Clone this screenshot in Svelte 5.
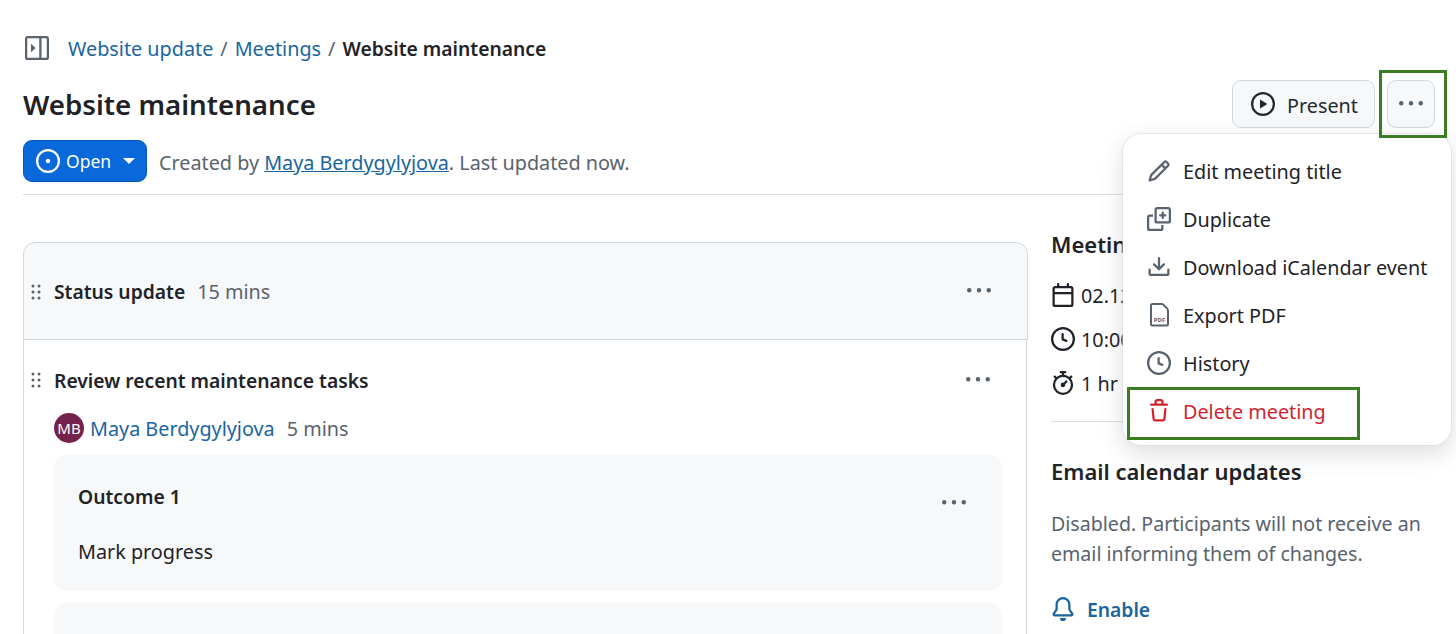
<script lang="ts">
  const icons: Record<string, string> = {
    sidebar: 'M6.823 7.823a.25.25 0 0 1 0 .354l-2.396 2.396A.25.25 0 0 1 4 10.396V5.604a.25.25 0 0 1 .427-.177Z M1.75 0h12.5C15.216 0 16 .784 16 1.75v12.5A1.75 1.75 0 0 1 14.25 16H1.75A1.75 1.75 0 0 1 0 14.25V1.75C0 .784.784 0 1.75 0ZM1.5 1.75v12.5c0 .138.112.25.25.25H9.5v-13H1.75a.25.25 0 0 0-.25.25ZM11 14.5h3.25a.25.25 0 0 0 .25-.25V1.75a.25.25 0 0 0-.25-.25H11Z',
    kebab: 'M8 9a1.5 1.5 0 1 0 0-3 1.5 1.5 0 0 0 0 3ZM1.5 9a1.5 1.5 0 1 0 0-3 1.5 1.5 0 0 0 0 3Zm13 0a1.5 1.5 0 1 0 0-3 1.5 1.5 0 0 0 0 3Z',
    play: 'M8 0a8 8 0 1 1 0 16A8 8 0 0 1 8 0ZM1.5 8a6.5 6.5 0 1 0 13 0 6.5 6.5 0 0 0-13 0Zm4.879-2.773 4.264 2.559a.25.25 0 0 1 0 .428l-4.264 2.559A.25.25 0 0 1 6 10.559V5.442a.25.25 0 0 1 .379-.215Z',
    open: 'M8 9.5a1.5 1.5 0 1 0 0-3 1.5 1.5 0 0 0 0 3Z M8 0a8 8 0 1 1 0 16A8 8 0 0 1 8 0ZM1.5 8a6.5 6.5 0 1 0 13 0 6.5 6.5 0 0 0-13 0Z',
    grabber: 'M10 13a1 1 0 1 1 0-2 1 1 0 0 1 0 2Zm0-4a1 1 0 1 1 0-2 1 1 0 0 1 0 2Zm-4 4a1 1 0 1 1 0-2 1 1 0 0 1 0 2Zm5-9a1 1 0 1 1-2 0 1 1 0 0 1 2 0ZM7 8a1 1 0 1 1-2 0 1 1 0 0 1 2 0ZM6 5a1 1 0 1 1 0-2 1 1 0 0 1 0 2Z',
    pencil: 'M11.013 1.427a1.75 1.75 0 0 1 2.474 0l1.086 1.086a1.75 1.75 0 0 1 0 2.474l-8.61 8.61c-.21.21-.47.364-.756.445l-3.251.93a.75.75 0 0 1-.927-.928l.929-3.25c.081-.286.235-.547.445-.758l8.61-8.61Zm.176 4.823L9.75 4.81l-6.286 6.287a.253.253 0 0 0-.064.108l-.558 1.953 1.953-.558a.253.253 0 0 0 .108-.064Zm1.238-3.763a.25.25 0 0 0-.354 0L10.811 3.75l1.439 1.44 1.263-1.263a.25.25 0 0 0 0-.354Z',
    duplicate: 'M10.5 3a.75.75 0 0 1 .75.75v1h1a.75.75 0 0 1 0 1.5h-1v1a.75.75 0 0 1-1.5 0v-1h-1a.75.75 0 0 1 0-1.5h1v-1A.75.75 0 0 1 10.5 3Z M6.75 0h7.5C15.216 0 16 .784 16 1.75v7.5A1.75 1.75 0 0 1 14.25 11h-7.5A1.75 1.75 0 0 1 5 9.25v-7.5C5 .784 5.784 0 6.75 0Zm0 1.5a.25.25 0 0 0-.25.25v7.5c0 .138.112.25.25.25h7.5a.25.25 0 0 0 .25-.25v-7.5a.25.25 0 0 0-.25-.25Z M1.75 5H4v1.5H1.75a.25.25 0 0 0-.25.25v7.5c0 .138.112.25.25.25h7.5a.25.25 0 0 0 .25-.25V12H11v2.25A1.75 1.75 0 0 1 9.25 16h-7.5A1.75 1.75 0 0 1 0 14.25v-7.5C0 5.784.784 5 1.75 5Z',
    download: 'M2.75 14A1.75 1.75 0 0 1 1 12.25v-2.5a.75.75 0 0 1 1.5 0v2.5c0 .138.112.25.25.25h10.5a.25.25 0 0 0 .25-.25v-2.5a.75.75 0 0 1 1.5 0v2.5A1.75 1.75 0 0 1 13.25 14Z M7.25 7.689V2a.75.75 0 0 1 1.5 0v5.689l1.97-1.969a.749.749 0 1 1 1.06 1.06l-3.25 3.25a.749.749 0 0 1-1.06 0L4.22 6.78a.749.749 0 1 1 1.06-1.06l1.97 1.969Z',
    clock: 'M8 0a8 8 0 1 1 0 16A8 8 0 0 1 8 0ZM1.5 8a6.5 6.5 0 1 0 13 0 6.5 6.5 0 0 0-13 0Zm7-3.25v2.992l2.028.812a.75.75 0 0 1-.557 1.392l-2.5-1A.751.751 0 0 1 7 8.25v-3.5a.75.75 0 0 1 1.5 0Z',
    trash: 'M11 1.75V3h2.25a.75.75 0 0 1 0 1.5H2.75a.75.75 0 0 1 0-1.5H5V1.75C5 .784 5.784 0 6.75 0h2.5C10.216 0 11 .784 11 1.75ZM4.496 6.675l.66 6.6a.25.25 0 0 0 .249.225h5.19a.25.25 0 0 0 .249-.225l.66-6.6a.75.75 0 0 1 1.492.149l-.66 6.6A1.748 1.748 0 0 1 10.595 15h-5.19a1.75 1.75 0 0 1-1.741-1.575l-.66-6.6a.75.75 0 1 1 1.492-.15ZM6.5 1.75V3h3V1.75a.25.25 0 0 0-.25-.25h-2.5a.25.25 0 0 0-.25.25Z',
    calendar: 'M4.75 0a.75.75 0 0 1 .75.75V2h5V.75a.75.75 0 0 1 1.5 0V2h1.25c.966 0 1.75.784 1.75 1.75v10.5A1.75 1.75 0 0 1 13.25 16H2.75A1.75 1.75 0 0 1 1 14.25V3.75C1 2.784 1.784 2 2.75 2H4V.75A.75.75 0 0 1 4.75 0ZM2.5 7.5v6.75c0 .138.112.25.25.25h10.5a.25.25 0 0 0 .25-.25V7.5Zm10.75-4H2.75a.25.25 0 0 0-.25.25V6h11V3.75a.25.25 0 0 0-.25-.25Z',
    stopwatch: 'M5.75.75A.75.75 0 0 1 6.5 0h3a.75.75 0 0 1 0 1.5h-.75v1l-.001.041a6.724 6.724 0 0 1 3.464 1.435l.007-.006.75-.75a.749.749 0 0 1 1.275.326.749.749 0 0 1-.215.734l-.75.75-.006.007a6.75 6.75 0 1 1-10.548 0L2.72 5.03l-.75-.75a.751.751 0 0 1 .018-1.042.751.751 0 0 1 1.042-.018l.75.75.007.006A6.72 6.72 0 0 1 7.25 2.541V1.5H6.5a.75.75 0 0 1-.75-.75ZM8 14.5a5.25 5.25 0 1 0-.001-10.501A5.25 5.25 0 0 0 8 14.5Zm.389-6.7 1.33-1.33a.75.75 0 1 1 1.061 1.06L9.45 8.861A1.503 1.503 0 0 1 8 10.75a1.499 1.499 0 1 1 .389-2.95Z',
    bell: 'M8 16a2 2 0 0 0 1.985-1.75c.017-.137-.097-.25-.235-.25h-3.5c-.138 0-.252.113-.235.25A2 2 0 0 0 8 16ZM3 5a5 5 0 0 1 10 0v2.947c0 .05.015.098.042.139l1.703 2.555A1.519 1.519 0 0 1 13.482 13H2.518a1.516 1.516 0 0 1-1.263-2.36l1.703-2.554A.255.255 0 0 0 3 7.947Zm5-3.5A3.5 3.5 0 0 0 4.5 5v2.947c0 .346-.102.683-.294.97l-1.703 2.556a.017.017 0 0 0-.003.01l.001.006c0 .002.002.004.004.006l.006.004.007.001h10.964l.007-.001.006-.004.004-.006.001-.007a.017.017 0 0 0-.003-.01l-1.703-2.554a1.745 1.745 0 0 1-.294-.97V5A3.5 3.5 0 0 0 8 1.5Z'
  };

  const menu = [
    { label: 'Edit meeting title', icon: 'pencil' },
    { label: 'Duplicate', icon: 'duplicate' },
    { label: 'Download iCalendar event', icon: 'download' },
    { label: 'Export PDF', icon: 'pdf' },
    { label: 'History', icon: 'clock' },
    { label: 'Delete meeting', icon: 'trash', danger: true }
  ];

  // the rest of these values sits under the open menu
  const details = [
    { icon: 'calendar', text: '02.12' },
    { icon: 'clock', text: '10:00' },
    { icon: 'stopwatch', text: '1 hr' }
  ];
</script>

{#snippet icon(name: string, size = 24)}
  <svg class="icon" width={size} height={size} viewBox="0 0 16 16" fill="currentColor" fill-rule="evenodd">
    <path d={icons[name]} />
  </svg>
{/snippet}

<div class="page">
  <nav class="crumbs">
    <span class="toggle">{@render icon('sidebar')}</span>
    <a href="#top">Website update</a>
    <span class="sep">/</span>
    <a href="#top">Meetings</a>
    <span class="sep">/</span>
    <strong>Website maintenance</strong>
  </nav>

  <header class="title-row">
    <h1>Website maintenance</h1>
    <div class="actions">
      <button class="btn present">{@render icon('play')}<span>Present</span></button>
      <button class="btn more">{@render icon('kebab')}</button>
    </div>
  </header>

  <div class="status-row">
    <button class="state">
      {@render icon('open')}
      <span>Open</span>
      <i class="caret"></i>
    </button>
    <p>Created by <a href="#top">Maya Berdygylyjova</a>. Last updated now.</p>
  </div>

  <div class="columns">
    <main class="agenda">
      <section class="section-head">
        <span class="grab">{@render icon('grabber')}</span>
        <b>Status update</b>
        <span class="muted">15 mins</span>
        <span class="kebab">{@render icon('kebab')}</span>
      </section>

      <section class="item">
        <div class="item-head">
          <span class="grab">{@render icon('grabber')}</span>
          <b>Review recent maintenance tasks</b>
          <span class="kebab">{@render icon('kebab')}</span>
        </div>
        <div class="presenter">
          <span class="avatar">MB</span>
          <a href="#top">Maya Berdygylyjova</a>
          <span class="muted">5 mins</span>
        </div>
        <div class="outcome">
          <div class="outcome-head">
            <b>Outcome 1</b>
            <span class="kebab">{@render icon('kebab')}</span>
          </div>
          <p>Mark progress</p>
        </div>
        <div class="outcome empty"></div>
      </section>
    </main>

    <aside class="side">
      <h2>Meeting details</h2>
      <ul>
        {#each details as d}
          <li>{@render icon(d.icon)}<span>{d.text}</span></li>
        {/each}
      </ul>
      <hr />
      <h2>Email calendar updates</h2>
      <p class="muted">Disabled. Participants will not receive an email informing them of changes.</p>
      <a class="enable" href="#top">{@render icon('bell')}<span>Enable</span></a>
    </aside>
  </div>

  <div class="menu">
    {#each menu as m}
      <div class="menu-item" class:danger={m.danger}>
        {#if m.icon === 'pdf'}
          <svg class="icon" width="24" height="24" viewBox="0 0 24 24" fill="none">
            <path d="M4 2.500c0-.8.7-1.500 1.500-1.500h9.300c.5 0 1 .2 1.400.6l3.800 3.800c.6.6 1 1.400 1 2.300v13.300c0 .8-.7 1.500-1.500 1.500h-14c-.8 0-1.500-.7-1.500-1.500Z" stroke="currentColor" stroke-width="2" />
            <text x="12.500" y="19" text-anchor="middle" font-size="6" font-weight="700" fill="currentColor">PDF</text>
          </svg>
        {:else}
          {@render icon(m.icon)}
        {/if}
        <span>{m.label}</span>
      </div>
    {/each}
  </div>

  <div class="mark mark-more"></div>
  <div class="mark mark-delete"></div>
</div>

<style>
  :global(body) {
    margin: 0;
    background: #fff;
  }
  .page {
    position: relative;
    height: 634px;
    overflow: hidden;
    padding: 32px 5px 0 23px;
    box-sizing: border-box;
    font-family: "Noto Sans", "Open Sans", sans-serif;
    font-size: 19.800px;
    color: #1f2328;
  }
  a {
    color: #1a659f;
    text-decoration: none;
  }
  .icon {
    display: block;
    flex: none;
  }
  .crumbs {
    display: flex;
    align-items: center;
    height: 32px;
    gap: 7px;
  }
  .toggle {
    color: #59636e;
    margin: 0 12px 0 2px;
  }
  .crumbs .sep {
    color: #59636e;
  }
  .crumbs strong {
    font-size: 19.300px;
    font-weight: 600;
  }
  .title-row {
    display: flex;
    align-items: center;
    justify-content: space-between;
    height: 48px;
    margin-top: 16px;
    padding-right: 16px;
  }
  h1 {
    margin: 0;
    font-size: 27.700px;
    font-weight: 600;
  }
  .actions {
    display: flex;
    gap: 12px;
  }
  .btn {
    display: flex;
    align-items: center;
    justify-content: center;
    height: 48px;
    border: 1px solid #d1d9e0;
    border-radius: 9px;
    background: #f6f8fa;
    color: #25292e;
    font: inherit;
    padding: 0;
  }
  .present {
    width: 143px;
    padding-left: 2px;
    gap: 12px;
  }
  .present span {
    margin-top: 2px;
  }
  .more {
    width: 48px;
    color: #59636e;
  }
  .status-row {
    display: flex;
    align-items: center;
    gap: 12px;
    height: 42px;
    margin-top: 12px;
  }
  .status-row p {
    margin: 2px 0 0;
    color: #59636e;
  }
  .status-row a {
    text-decoration: underline;
  }
  .state {
    display: flex;
    align-items: center;
    width: 124px;
    height: 42px;
    padding: 0 0 0 12px;
    box-sizing: border-box;
    border: 1px solid #0757ba;
    border-radius: 9px;
    background: #0969da;
    color: #fff;
    font: inherit;
    font-size: 17.500px;
  }
  .state span {
    margin-left: 6px;
  }
  .caret {
    margin-left: 12px;
    border-top: 6px solid #fff;
    border-left: 6.500px solid transparent;
    border-right: 6.500px solid transparent;
  }
  .columns {
    display: flex;
    gap: 23px;
    margin-top: 12px;
    padding-top: 47px;
    border-top: 1px solid #d8dee4;
  }
  .agenda {
    flex: none;
    width: 1005px;
  }
  b {
    font-size: 19.300px;
    font-weight: 600;
  }
  .muted {
    color: #59636e;
  }
  .grab {
    color: #59636e;
    flex: none;
  }
  .kebab {
    color: #59636e;
    margin-left: auto;
  }
  .section-head {
    display: flex;
    align-items: center;
    gap: 12px;
    height: 95px;
    padding: 1px 36px 0 0;
    box-sizing: content-box;
    border: 1px solid #d1d9e0;
    border-radius: 12px 12px 0 0;
    background: #f6f8fa;
  }
  .section-head .grab {
    margin-right: -6px;
  }
  .section-head .kebab {
    margin-top: -2px;
  }
  .item {
    margin-right: 1px;
    padding: 0 24px 0 30px;
    border: 1px solid #d1d9e0;
    border-top: 0;
    border-radius: 0 0 12px 12px;
  }
  .item-head {
    display: flex;
    align-items: center;
    height: 62px;
    margin: 0 12px 0 -30px;
    padding-top: 9px;
    gap: 6px;
  }
  .presenter {
    display: flex;
    align-items: center;
    height: 30px;
    margin-top: 2px;
    gap: 6px;
  }
  .presenter .muted {
    margin-left: 6px;
  }
  .avatar {
    display: grid;
    place-items: center;
    width: 30px;
    height: 30px;
    border-radius: 50%;
    background: #74224b;
    color: #fff;
    font-size: 15px;
  }
  .outcome {
    box-sizing: border-box;
    height: 136px;
    margin-top: 12px;
    padding: 24px 36px 24px 24px;
    border-radius: 12px;
    background: #f6f8fa;
  }
  .outcome.empty {
    height: 120px;
  }
  .outcome-head {
    display: flex;
    align-items: center;
    height: 34px;
  }
  .outcome-head .kebab {
    margin-top: 13px;
  }
  .outcome p {
    margin: 25px 0 0;
  }
  .side {
    flex: 1;
    min-width: 0;
    margin-top: -13px;
  }
  h2 {
    margin: 0;
    font-size: 22px;
    line-height: 30px;
    font-weight: 600;
  }
  .side ul {
    list-style: none;
    margin: 14px 0 0;
    padding: 0;
  }
  .side li {
    display: flex;
    align-items: center;
    gap: 6px;
    height: 44px;
    white-space: nowrap;
  }
  hr {
    margin: 16px 0 34px;
    border: 0;
    border-top: 1px solid #d8dee4;
  }
  .side p {
    margin: 23px 0 25px;
    width: 380px;
    font-size: 19.600px;
    line-height: 30px;
  }
  .enable {
    display: flex;
    align-items: center;
    gap: 12px;
    height: 30px;
    font-size: 19.300px;
    font-weight: 600;
  }
  .menu {
    position: absolute;
    left: 1123px;
    top: 134px;
    width: 328px;
    height: 311px;
    box-sizing: border-box;
    padding-top: 13px;
    border-radius: 18px;
    background: #fff;
    box-shadow: 0 0 0 1px #d1d9e080, 0 8px 24px rgba(37, 41, 46, 0.16);
  }
  .menu-item {
    display: flex;
    align-items: center;
    gap: 12px;
    height: 48px;
    padding-left: 24px;
    white-space: nowrap;
  }
  .menu-item .icon {
    color: #59636e;
  }
  .menu-item.danger,
  .menu-item.danger .icon {
    color: #d1242f;
  }
  .mark {
    position: absolute;
    box-sizing: border-box;
    border: 3px solid #3a7d22;
  }
  .mark-more {
    left: 1379px;
    top: 70px;
    width: 68px;
    height: 68px;
  }
  .mark-delete {
    left: 1127px;
    top: 387px;
    width: 233px;
    height: 53px;
  }
</style>
